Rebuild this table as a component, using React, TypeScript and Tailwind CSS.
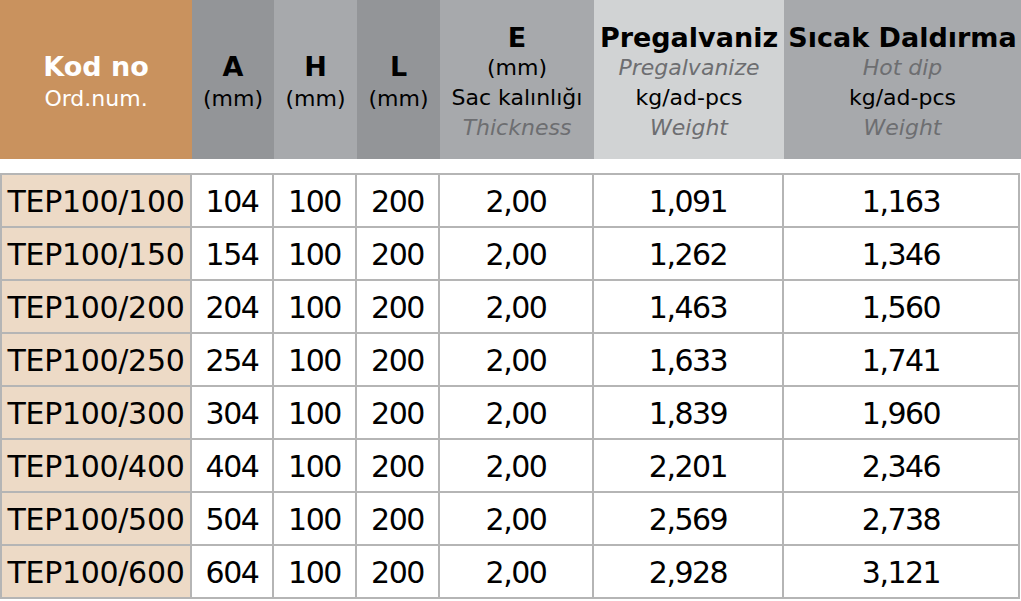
import React from "react";

const rows = [
  ["TEP100/100", "104", "100", "200", "2,00", "1,091", "1,163"],
  ["TEP100/150", "154", "100", "200", "2,00", "1,262", "1,346"],
  ["TEP100/200", "204", "100", "200", "2,00", "1,463", "1,560"],
  ["TEP100/250", "254", "100", "200", "2,00", "1,633", "1,741"],
  ["TEP100/300", "304", "100", "200", "2,00", "1,839", "1,960"],
  ["TEP100/400", "404", "100", "200", "2,00", "2,201", "2,346"],
  ["TEP100/500", "504", "100", "200", "2,00", "2,569", "2,738"],
  ["TEP100/600", "604", "100", "200", "2,00", "2,928", "3,121"],
];

const cols = "grid grid-cols-[192px_82px_83px_83px_154px_190px_237px]";

export default function App() {
  return (
    <div
      className="w-[1021px] h-[601px] bg-white overflow-hidden text-black"
      style={{ fontFamily: '"DejaVu Sans", Verdana, sans-serif' }}
    >
      <div className={`${cols} h-[159px]`}>
        <div className="bg-[#c9925e] flex flex-col items-center justify-center pt-[6px] text-white leading-[32px]">
          <div className="text-[27px] font-bold">Kod no</div>
          <div className="text-[22px]">Ord.num.</div>
        </div>
        <div className="bg-[#939598] flex flex-col items-center justify-center pt-[6px] leading-[32px]">
          <div className="text-[27px] font-bold">A</div>
          <div className="text-[22px]">(mm)</div>
        </div>
        <div className="bg-[#a7a9ac] flex flex-col items-center justify-center pt-[6px] leading-[32px]">
          <div className="text-[27px] font-bold">H</div>
          <div className="text-[22px]">(mm)</div>
        </div>
        <div className="bg-[#939598] flex flex-col items-center justify-center pt-[6px] leading-[32px]">
          <div className="text-[27px] font-bold">L</div>
          <div className="text-[22px]">(mm)</div>
        </div>
        <div className="bg-[#a7a9ac] flex flex-col items-center justify-center pt-[6px] leading-[30px]">
          <div className="text-[27px] font-bold">E</div>
          <div className="text-[22px]">(mm)</div>
          <div className="text-[22px] whitespace-nowrap">Sac kalınlığı</div>
          <div className="text-[22px] italic text-[#6d6e71]">Thickness</div>
        </div>
        <div className="bg-[#d1d3d4] flex flex-col items-center justify-center pt-[6px] leading-[30px]">
          <div className="text-[27px] font-bold whitespace-nowrap">Pregalvaniz</div>
          <div className="text-[22px] italic text-[#6d6e71]">Pregalvanize</div>
          <div className="text-[22px]">kg/ad-pcs</div>
          <div className="text-[22px] italic text-[#6d6e71]">Weight</div>
        </div>
        <div className="bg-[#a7a9ac] flex flex-col items-center justify-center pt-[6px] leading-[30px]">
          <div className="text-[27px] font-bold whitespace-nowrap">Sıcak Daldırma</div>
          <div className="text-[22px] italic text-[#6d6e71]">Hot dip</div>
          <div className="text-[22px]">kg/ad-pcs</div>
          <div className="text-[22px] italic text-[#6d6e71]">Weight</div>
        </div>
      </div>

      <div className="mt-[14px] w-[1020px] border-t-2 border-l-2 border-[#b5b5b5]">
        {rows.map((r, i) => (
          <div key={i} className="grid grid-cols-[190px_82px_83px_83px_154px_190px_236px] h-[53px]">
            {r.map((c, j) => (
              <div
                key={j}
                className={`flex items-center justify-center pt-[1px] border-r-2 border-b-2 border-[#b5b5b5] text-[30px] ${
                  j === 0 ? "bg-[#eddac6] tracking-[-0.3px]" : "bg-white tracking-[-1.5px]"
                }`}
              >
                {c}
              </div>
            ))}
          </div>
        ))}
      </div>
    </div>
  );
}
